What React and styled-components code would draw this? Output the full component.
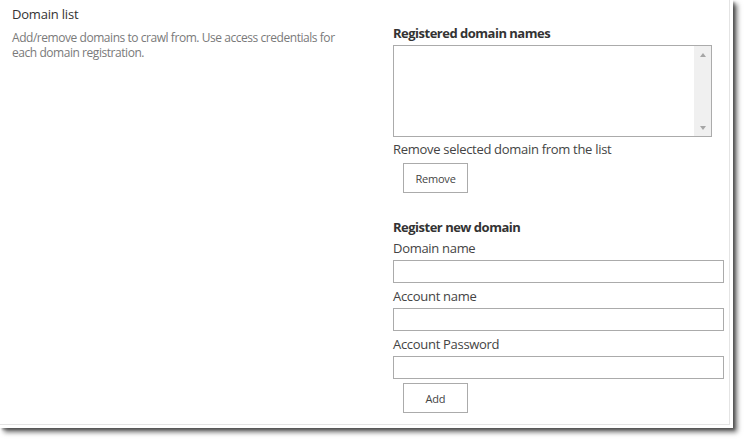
import React from "react";
import styled, { createGlobalStyle } from "styled-components";

const Global = createGlobalStyle`
  html, body { margin: 0; padding: 0; background: #ffffff; }
  body { font-family: "Open Sans", "Noto Sans", sans-serif; }
  * { box-sizing: border-box; }
`;

const Page = styled.div`
  width: 748px;
  height: 444px;
  background: #ffffff;
`;

const Frame = styled.div`
  width: 733px;
  height: 428px;
  background: #ffffff;
  box-shadow: inset -3px -3px 0 #ffffff, inset -4px -4px 0 #e4e4e4,
    4px 4px 5px rgba(0, 0, 0, 0.6), 2px 2px 2px rgba(0, 0, 0, 0.25);
  display: grid;
  grid-template-columns: 381px 331px;
  align-items: start;
  padding: 5px 0 0 12px;
`;

const LeftCol = styled.div`
  display: flex;
  flex-direction: column;
`;

const RightCol = styled.div`
  display: flex;
  flex-direction: column;
  align-items: flex-start;
`;

const SectionTitle = styled.div`
  font-size: 13px;
  line-height: 18px;
  color: #333333;
  letter-spacing: -0.2px;
`;

const Description = styled.div`
  margin-top: 6.5px;
  width: 330px;
  font-size: 12px;
  line-height: 15px;
  color: #7a7a7a;
  letter-spacing: -0.45px;
`;

const Heading = styled.div`
  margin-top: ${(p) => p.$top}px;
  font-size: 13px;
  line-height: 18px;
  font-weight: 700;
  color: #333333;
  letter-spacing: -0.5px;
`;

const Label = styled.div`
  margin-top: ${(p) => p.$top}px;
  font-size: 13px;
  line-height: 18px;
  color: #444444;
  letter-spacing: -0.3px;
`;

const ListBox = styled.div`
  margin-top: 3px;
  width: 319px;
  height: 92px;
  border: 1px solid #ababab;
  background: #ffffff;
  display: flex;
`;

const ListArea = styled.div`
  flex: 1;
`;

const ScrollTrack = styled.div`
  width: 17px;
  background: #f0f0f0;
  display: flex;
  flex-direction: column;
  justify-content: space-between;
  align-items: center;
  padding: 7px 0 6px;
`;

const Arrow = styled.span`
  width: 0;
  height: 0;
  border-left: 3.5px solid transparent;
  border-right: 3.5px solid transparent;
  ${(p) =>
    p.$down
      ? "border-top: 4px solid #a6a6a6;"
      : "border-bottom: 4px solid #a6a6a6;"}
`;

const Button = styled.button`
  margin-top: ${(p) => p.$top}px;
  margin-left: 10px;
  width: 65px;
  height: 30px;
  border: 1px solid #ababab;
  background: #ffffff;
  color: #444444;
  font-family: "Open Sans", "Noto Sans", sans-serif;
  font-size: 11px;
  letter-spacing: -0.2px;
  padding: 0;
`;

const Input = styled.input`
  margin-top: 3px;
  width: 331px;
  height: 23px;
  border: 1px solid #ababab;
  background: #ffffff;
  padding: 0 4px;
  font-family: inherit;
  font-size: 13px;
  outline: none;
`;

function Field({ label, top, type = "text" }) {
  return (
    <>
      <Label $top={top}>{label}</Label>
      <Input type={type} />
    </>
  );
}

export default function App() {
  return (
    <Page>
      <Global />
      <Frame>
        <LeftCol>
          <SectionTitle>Domain list</SectionTitle>
          <Description>
            Add/remove domains to crawl from. Use access credentials for each
            domain registration.
          </Description>
        </LeftCol>
        <RightCol>
          <Heading $top={19}>Registered domain names</Heading>
          <ListBox>
            <ListArea />
            <ScrollTrack>
              <Arrow />
              <Arrow $down />
            </ScrollTrack>
          </ListBox>
          <Label $top={3}>Remove selected domain from the list</Label>
          <Button $top={5}>Remove</Button>
          <Heading $top={25}>Register new domain</Heading>
          <Field label="Domain name" top={3} />
          <Field label="Account name" top={4} />
          <Field label="Account Password" top={4} type="password" />
          <Button $top={4}>Add</Button>
        </RightCol>
      </Frame>
    </Page>
  );
}
